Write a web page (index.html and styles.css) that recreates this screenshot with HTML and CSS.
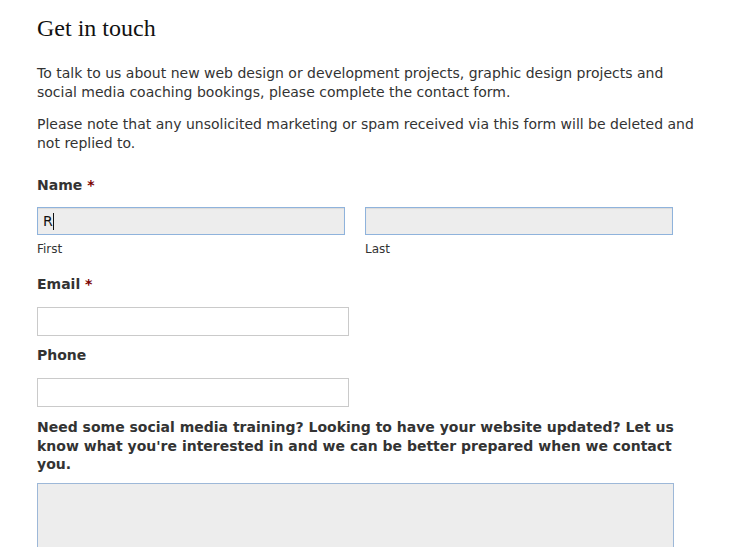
FILE: index.html
```html
<!DOCTYPE html>
<html>
<head>
<meta charset="utf-8">
<link rel="stylesheet" href="styles.css">
</head>
<body>
<main class="page">
  <h1 class="title">Get in touch</h1>
  <p class="intro">To talk to us about new web design or development projects, graphic design projects and social media coaching bookings, please complete the contact form.</p>
  <p class="intro">Please note that any unsolicited marketing or spam received via this form will be deleted and not replied to.</p>

  <form class="form">
    <div class="field name-field">
      <div class="label">Name <span class="req">*</span></div>
      <div class="name-row">
        <div class="name-part">
          <div class="input focus"><span class="typed">R</span><span class="caret"></span></div>
          <div class="sub">First</div>
        </div>
        <div class="name-part">
          <div class="input focus"></div>
          <div class="sub">Last</div>
        </div>
      </div>
    </div>

    <div class="field email-field">
      <div class="label single">Email <span class="req">*</span></div>
      <div class="input plain"></div>
    </div>

    <div class="field">
      <div class="label single">Phone</div>
      <div class="input plain"></div>
    </div>

    <div class="field">
      <div class="label long">Need some social media training? Looking to have your website updated? Let us know what you're interested in and we can be better prepared when we contact you.</div>
      <div class="textarea"></div>
    </div>
  </form>
</main>
</body>
</html>
```

FILE: styles.css
```css
html, body {
  margin: 0;
  padding: 0;
  background: #fff;
  overflow: hidden;
}
.page {
  padding: 12px 0 0 37px;
  width: 662px;
  font-family: "DejaVu Sans", Verdana, sans-serif;
  font-size: 14px;
  color: #333;
}
.title {
  font-family: "Liberation Serif", Georgia, serif;
  font-weight: normal;
  font-size: 24px;
  color: #111;
  margin: 0 0 20px 0;
  line-height: 32px;
}
.intro {
  margin: 0 0 13px 0;
  line-height: 19px;
}
.form {
  margin-top: 23px;
}
.field {
  margin-bottom: 11px;
}
.name-field {
  margin-bottom: 18px;
}
.email-field {
  margin-bottom: 10px;
}
.label {
  font-weight: bold;
  line-height: 19px;
  margin-bottom: 12px;
}
.label.single {
  margin-bottom: 13px;
}
.label.long {
  line-height: 18.5px;
  margin-bottom: 9px;
}
.req {
  color: #7a0000;
}
.name-row {
  display: flex;
  gap: 20px;
}
.name-part {
  width: 308px;
}
.input {
  box-sizing: border-box;
  height: 28px;
  display: flex;
  align-items: center;
  padding-left: 5px;
}
.input.focus {
  background: #ededed;
  border: 1px solid #8fb3dc;
  box-shadow: inset 0 1px 1px rgba(0,0,0,0.08);
}
.input.plain {
  width: 312px;
  height: 29px;
  background: #fff;
  border: 1px solid #cacaca;
}
.typed {
  color: #111;
  font-size: 14px;
}
.caret {
  display: inline-block;
  width: 1px;
  height: 17px;
  background: #111;
}
.sub {
  font-size: 12px;
  line-height: 16px;
  margin-top: 6px;
  color: #333;
}
.textarea {
  box-sizing: border-box;
  width: 637px;
  height: 120px;
  background: #ededed;
  border: 1px solid #9db8d8;
}
```
